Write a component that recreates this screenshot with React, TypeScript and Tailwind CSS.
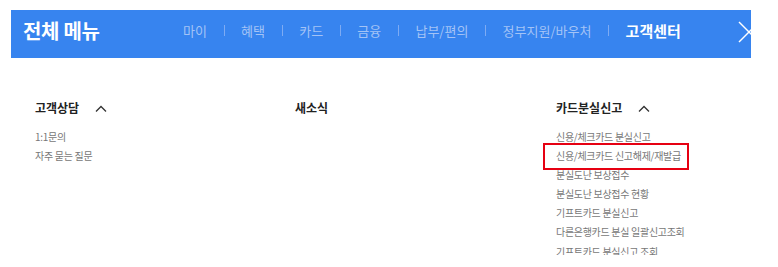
import React from "react";

const navItems = ["마이", "혜택", "카드", "금융", "납부/편의", "정부지원/바우처"];

function Chevron() {
  return (
    <svg width="12" height="7" viewBox="0 0 12 7" className="ml-[16px] shrink-0">
      <polyline points="1,6.5 6,1.5 11,6.5" fill="none" stroke="#333" strokeWidth="1.3" />
    </svg>
  );
}

export default function App() {
  const font = { fontFamily: '"Noto Sans CJK KR", "Noto Sans", sans-serif' };
  return (
    <div className="w-[778px] h-[267px] bg-white overflow-hidden" style={font}>
      <div className="h-[255px] overflow-hidden">
        <div className="pt-[10px] pl-[11px]">
          <div className="w-[740px] h-[48px] bg-[#3784ef] flex items-center pl-[12px] pb-[7px] overflow-hidden">
            <div className="w-[160px] shrink-0 text-white text-[20px] font-bold leading-none tracking-[-0.3px]">
              전체 메뉴
            </div>
            <div className="flex items-center gap-[16.6px] text-[13px] leading-none">
              {navItems.map((it) => (
                <React.Fragment key={it}>
                  <span className="text-[#a3c3f6]">{it}</span>
                  <span className="w-[1px] h-[11px] bg-[#7eabf3]" />
                </React.Fragment>
              ))}
              <span className="text-white font-bold text-[15px]">고객센터</span>
            </div>
            <svg width="22" height="22" viewBox="0 0 22 22" className="ml-auto mr-[-9px] shrink-0 mt-[3px]">
              <line x1="1" y1="1" x2="21" y2="21" stroke="white" strokeWidth="1.4" />
              <line x1="21" y1="1" x2="1" y2="21" stroke="white" strokeWidth="1.4" />
            </svg>
          </div>
        </div>
        <div className="flex pl-[35px] pt-[40px]">
          <div className="w-[260px] shrink-0">
            <div className="flex items-center h-[20px] text-[12px] font-bold text-[#222]">
              고객상담
              <Chevron />
            </div>
            <ul className="mt-[9px] text-[10px] leading-[19.1px] text-[#777] tracking-[-0.3px]">
              <li>1:1문의</li>
              <li>자주 묻는 질문</li>
            </ul>
          </div>
          <div className="w-[261px] shrink-0">
            <div className="flex items-center h-[20px] text-[12px] font-bold text-[#222]">새소식</div>
          </div>
          <div className="w-[220px] shrink-0">
            <div className="flex items-center h-[20px] text-[12px] font-bold text-[#222]">
              카드분실신고
              <Chevron />
            </div>
            <ul className="relative mt-[9px] text-[10px] leading-[19.1px] text-[#777] tracking-[-0.3px]">
              <li>신용/체크카드 분실신고</li>
              <li>신용/체크카드 신고해제/재발급</li>
              <li>분실도난 보상접수</li>
              <li>분실도난 보상접수 현황</li>
              <li>기프트카드 분실신고</li>
              <li>다른은행카드 분실 일괄신고조회</li>
              <li>기프트카드 분실신고 조회</li>
              <div className="absolute left-[-13px] top-[16px] w-[146px] h-[27px] border-2 border-[#e60012]" />
            </ul>
          </div>
        </div>
      </div>
    </div>
  );
}
